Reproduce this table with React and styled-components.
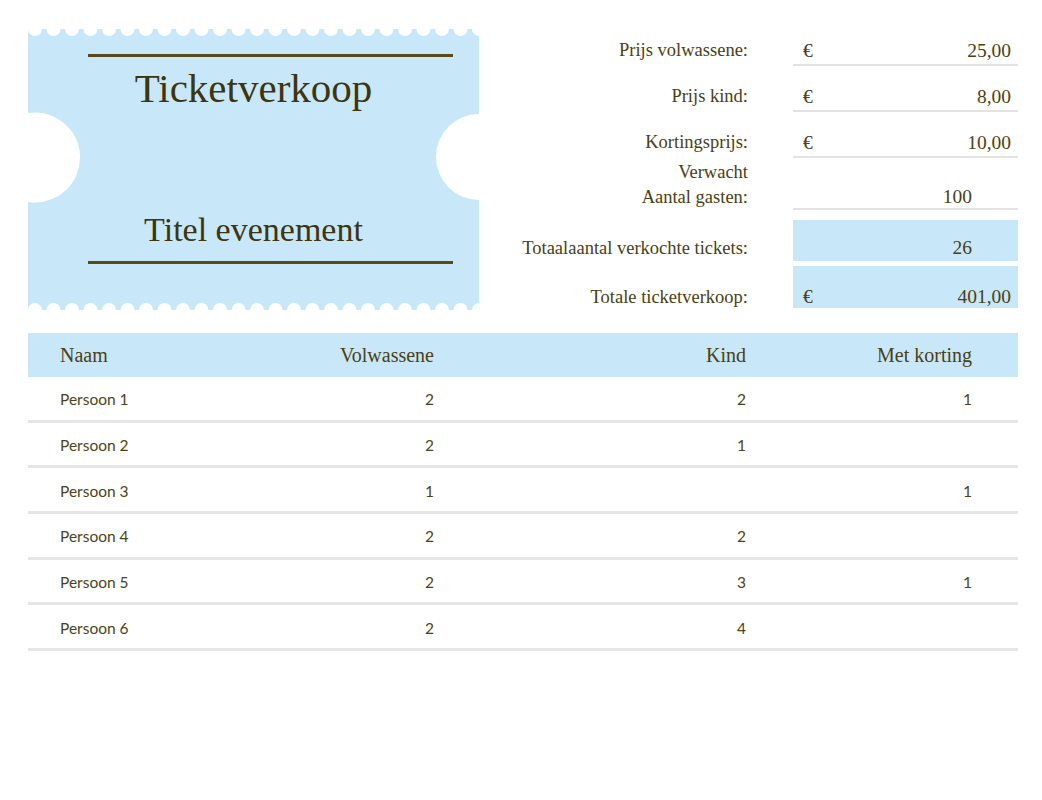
import React from 'react'
import styled, { createGlobalStyle } from 'styled-components'

const BLUE = '#c8e8f9'
const INK = '#4a4014'
const RULE = '#e3e3e3'

/* Data */
const prices = [
  { label: 'Prijs volwassene:', value: '25,00' },
  { label: 'Prijs kind:', value: '8,00' },
  { label: 'Kortingsprijs:', value: '10,00' },
]

const guests = [
  { name: 'Persoon 1', adult: 2, child: 2, discount: 1 },
  { name: 'Persoon 2', adult: 2, child: 1, discount: '' },
  { name: 'Persoon 3', adult: 1, child: '', discount: 1 },
  { name: 'Persoon 4', adult: 2, child: 2, discount: '' },
  { name: 'Persoon 5', adult: 2, child: 3, discount: 1 },
  { name: 'Persoon 6', adult: 2, child: 4, discount: '' },
]

const scallops = Array.from({ length: 25 }, (_, i) => 7 + i * 18.5)

export default function App() {
  return (
    <>
      <GlobalStyle />
      <Page>
        <Top>
          <Ticket>
            <TicketShape width="451" height="281" viewBox="0 0 451 281">
              <rect width="451" height="281" fill={BLUE} />
              {scallops.map(x => <circle key={'t' + x} cx={x} cy="0" r="7" fill="#fff" />)}
              {scallops.map(x => <circle key={'b' + x} cx={x} cy="281" r="7" fill="#fff" />)}
              <circle cx="7" cy="128.5" r="45" fill="#fff" />
              <circle cx="451" cy="128" r="43" fill="#fff" />
            </TicketShape>
            <Rule />
            <TicketTitle>Ticketverkoop</TicketTitle>
            <Spacer />
            <EventTitle>Titel evenement</EventTitle>
            <Rule />
          </Ticket>

          <Summary>
            {prices.map(p => (
              <React.Fragment key={p.label}>
                <Label>{p.label}</Label>
                <Value><span>€</span><span>{p.value}</span></Value>
              </React.Fragment>
            ))}
            <Label $lines>Verwacht<br />Aantal gasten:</Label>
            <Value $count $pad={1}><span>100</span></Value>

            <Label $pad={2.5}>Totaalaantal verkochte tickets:</Label>
            <Value $filled $top={10} $count><span>26</span></Value>

            <Label $pad={0.5}>Totale ticketverkoop:</Label>
            <Value $filled $top={5} $pad={1}><span>€</span><span>401,00</span></Value>
          </Summary>
        </Top>

        <Table>
          <HeadRow>
            <HeadCell>Naam</HeadCell>
            <HeadCell $right>Volwassene</HeadCell>
            <HeadCell $right>Kind</HeadCell>
            <HeadCell $right>Met korting</HeadCell>
          </HeadRow>
          {guests.map(g => (
            <BodyRow key={g.name}>
              <Cell>{g.name}</Cell>
              <Cell $right>{g.adult}</Cell>
              <Cell $right>{g.child}</Cell>
              <Cell $right>{g.discount}</Cell>
            </BodyRow>
          ))}
        </Table>
      </Page>
    </>
  )
}

/* Styles */
const GlobalStyle = createGlobalStyle`
  body {
    margin: 0;
    background: #ffffff;
  }
`

const Page = styled.div`
  width: 990px;
  padding: 29px 0 0 28px;
  font-family: "Liberation Serif", "Times New Roman", serif;
  color: ${INK};
`

const Top = styled.section`
  display: flex;
`

const Ticket = styled.div`
  position: relative;
  flex: none;
  width: 451px;
  height: 281px;
  box-sizing: border-box;
  padding: 25px 0 46px;
  display: flex;
  flex-direction: column;
  color: #3d3410;
`

const TicketShape = styled.svg`
  position: absolute;
  left: 0;
  top: 0;
`

const Rule = styled.div`
  position: relative;
  height: 3px;
  margin: 0 26px 0 60px;
  background: #5a4a1a;
`

const TicketTitle = styled.h1`
  position: relative;
  margin: 11px 0 0;
  font-size: 41px;
  line-height: 1;
  font-weight: normal;
  text-align: center;
`

const Spacer = styled.div`
  flex: 1;
`

const EventTitle = styled.h2`
  position: relative;
  margin: 0 0 14px;
  font-size: 34px;
  line-height: 1;
  font-weight: normal;
  text-align: center;
`

const Summary = styled.div`
  flex: 1;
  display: grid;
  grid-template-columns: 269px 225px;
  grid-template-rows: 37px 46px 46px 52px 51px 47px;
  column-gap: 45px;
  font-size: 18.5px;
`

const Label = styled.div`
  align-self: end;
  text-align: right;
  line-height: ${p => (p.$lines ? '25px' : '21px')};
  padding-bottom: ${p => (p.$pad !== undefined ? p.$pad : p.$lines ? 0 : 5)}px;
`

const Value = styled.div`
  display: flex;
  align-items: flex-end;
  justify-content: ${p => (p.$count ? 'flex-end' : 'space-between')};
  margin-top: ${p => p.$top || 0}px;
  padding: 0 ${p => (p.$count ? 46 : 7)}px ${p => (p.$pad !== undefined ? p.$pad : 3)}px 10px;
  font-size: 19.5px;
  line-height: ${p => (p.$filled ? '20px' : '21px')};
  background: ${p => (p.$filled ? BLUE : 'transparent')};
  border-bottom: ${p => (p.$filled ? 'none' : `2px solid ${RULE}`)};
`

const Table = styled.div`
  margin-top: 23px;
`

const columns = `
  display: grid;
  grid-template-columns: 190px 184px 312px 226px;
  align-items: center;
  padding: 0 46px 0 32px;
  box-sizing: border-box;
`

const HeadRow = styled.div`
  ${columns}
  height: 44px;
  background: ${BLUE};
  font-size: 20px;
`

const HeadCell = styled.div`
  text-align: ${p => (p.$right ? 'right' : 'left')};
`

const BodyRow = styled.div`
  ${columns}
  height: 45.7px;
  padding-top: 2px;
  border-bottom: 3px solid #e6e6e6;
  font-family: Lato, "Open Sans", sans-serif;
  font-size: 15.5px;
  color: #4c4416;
`

const Cell = styled.div`
  text-align: ${p => (p.$right ? 'right' : 'left')};
`
